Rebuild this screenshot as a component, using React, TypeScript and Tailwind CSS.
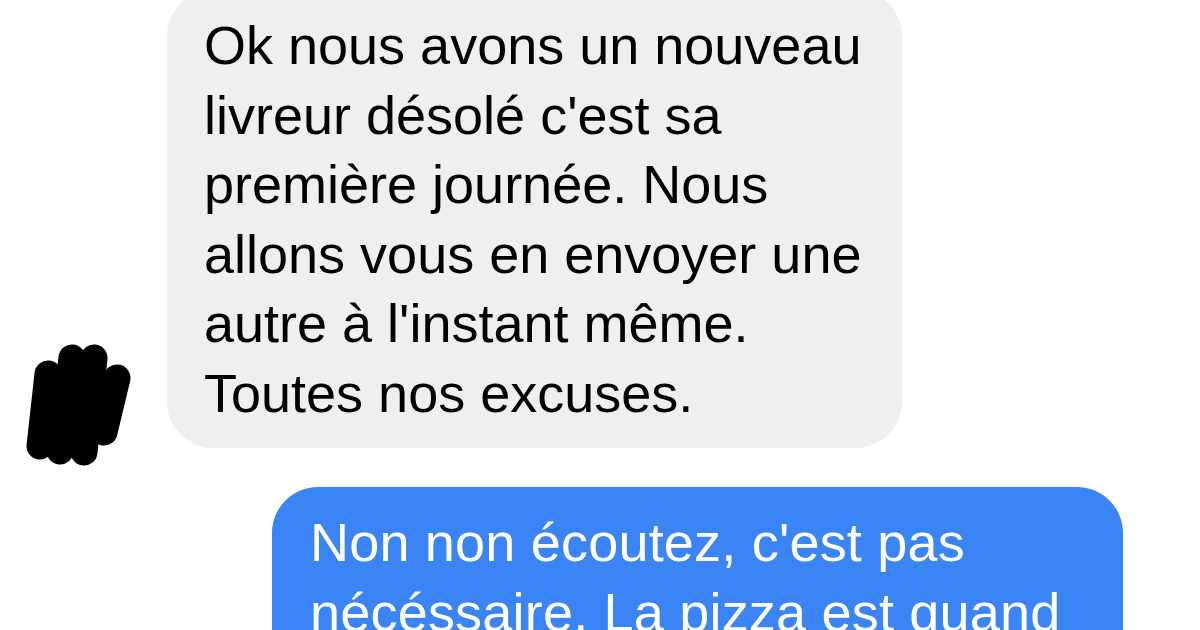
import React from "react";

const font = { fontFamily: '"Liberation Sans", Arial, sans-serif' };

function Scribble() {
  const o = (x: number, y: number) => `${x - 24} ${y - 341}`;
  return (
    <svg width="110" height="133" viewBox="0 0 110 133" className="shrink-0 mb-[-22px]">
      <g stroke="#000" strokeWidth="27" strokeLinecap="round" strokeLinejoin="round" fill="none">
        <path d={`M${o(48, 378)} L${o(40, 450)}`} />
        <path d={`M${o(72, 362)} L${o(60, 455)}`} />
        <path d={`M${o(94, 362)} L${o(84, 456)}`} />
        <path d={`M${o(117, 382)} L${o(104, 436)}`} />
        <path d={`M${o(54, 392)} L${o(110, 398)}`} />
        <path d={`M${o(50, 425)} L${o(100, 428)}`} />
      </g>
    </svg>
  );
}

export default function App() {
  return (
    <div className="w-[1200px] h-[630px] overflow-hidden bg-white" style={font}>
      <div className="flex flex-col mt-[-10px]">
        <div className="flex items-end pl-[24px] gap-[33px]">
          <Scribble />
          <div className="bg-[#efefef] rounded-[46px] w-[735px] pl-[37px] pt-[21px] pb-[20px] text-[54px] leading-[69.5px] text-black whitespace-nowrap">
            Ok nous avons un nouveau
            <br />
            livreur désolé c'est sa
            <br />
            première journée. Nous
            <br />
            allons vous en envoyer une
            <br />
            autre à l'instant même.
            <br />
            Toutes nos excuses.
          </div>
        </div>
        <div className="flex mt-[39px] pl-[272px]">
          <div className="bg-[#3a84f5] rounded-[46px] w-[851px] pl-[38px] pt-[21px] pb-[19px] text-[54px] leading-[69.5px] text-white whitespace-nowrap tracking-[0.2px]">
            Non non écoutez, c'est pas
            <br />
            nécéssaire. La pizza est quand
            <br />
            même bonne.
          </div>
        </div>
      </div>
    </div>
  );
}
